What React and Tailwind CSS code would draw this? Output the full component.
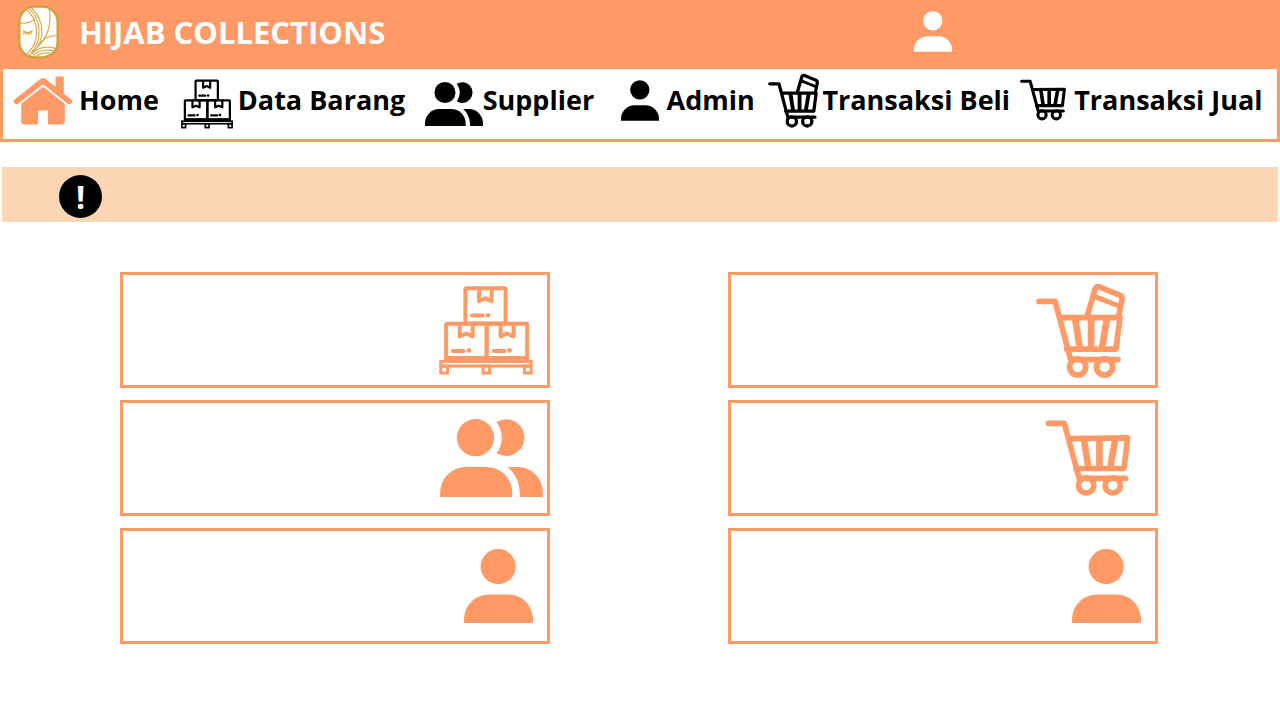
function HouseIcon({ className }) {
  return (
    <svg viewBox="37 227 182 147" className={className} fill="currentColor" aria-hidden="true">
      <path d="M40 299 L122 234 Q128 230 134 234 L166 259 V231 Q166 228 169 228 H188 Q191 228 191 231 V280 L216 300 Q219 303 216 306 L211 311 Q208 314 204 311 L132 254 Q128 251 124 254 L52 311 Q48 314 45 311 L39 305 Q37 302 40 299Z" />
      <path d="M128 259 L194 310 V364 Q194 373 185 373 H143 V334 Q143 331 140 331 H116 Q113 331 113 334 V373 H71 Q62 373 62 364 V310Z" />
    </svg>
  );
}

function BoxesIcon({ className }) {
  return (
    <svg viewBox="58 64 282 268" className={className} fill="none" stroke="currentColor" aria-hidden="true">
      <g strokeWidth="12" strokeLinejoin="round" strokeLinecap="round">
        <rect x="137" y="71" width="121" height="106" rx="3" />
        <rect x="79" y="178" width="122" height="104" rx="3" />
        <rect x="201" y="178" width="122" height="104" rx="3" />
        <path d="M178 72V110L197 101L216 110V72" />
        <path d="M120 180V216L140 207L159 216V180" />
        <path d="M243 180V216L262 207L282 216V180" />
        <path d="M157 153H189M99 260H132M222 260H255" />
      </g>
      <g fill="currentColor" stroke="none">
        <circle cx="205" cy="152" r="7" />
        <circle cx="148" cy="258" r="7" />
        <circle cx="270" cy="258" r="7" />
        <path d="M74 275H328V292H74Z" />
      </g>
      <g strokeWidth="9">
        <rect x="63" y="291" width="272" height="14" />
        <rect x="63" y="305" width="20" height="21" />
        <rect x="190" y="305" width="20" height="21" />
        <rect x="315" y="305" width="20" height="21" />
      </g>
    </svg>
  );
}

function CartIcon({ className }) {
  return (
    <svg viewBox="78 76 257 229" className={className} fill="none" stroke="currentColor" strokeWidth="17" strokeLinecap="round" strokeLinejoin="round" aria-hidden="true">
      <path d="M87 86H135L180 252H320" />
      <path d="M150 132L326 130L315 222H170" />
      <path d="M194 132L208 222M241 132V222M289 131L273 222" strokeLinecap="butt" strokeWidth="20" />
      <circle cx="201" cy="273" r="23" />
      <circle cx="281" cy="273" r="23" />
    </svg>
  );
}

function CartBoxIcon({ className }) {
  return (
    <svg viewBox="50 49 265 283" className={className} fill="none" stroke="currentColor" strokeWidth="17" strokeLinecap="round" strokeLinejoin="round" aria-hidden="true">
      <path d="M59 104H107L153 277H294" />
      <path d="M122 152H300L288 246H142" />
      <path d="M166 152L181 246M214 152V246M262 152L246 246" strokeLinecap="butt" strokeWidth="20" />
      <path d="M202 150L226 67Q230 57 240 61L299 85Q308 89 306 98L296 150" />
      <path d="M224 89L300 119" strokeWidth="15" />
      <circle cx="174" cy="299" r="24" />
      <circle cx="254" cy="299" r="24" />
    </svg>
  );
}

function UsersIcon({ className }) {
  return (
    <svg viewBox="60 72 308 234" className={className} fill="currentColor" aria-hidden="true">
      <circle cx="166" cy="128" r="56" />
      <path d="M229 81A55 55 0 1 1 229 175A78 78 0 0 0 229 81Z" />
      <path d="M60 306V292A76 76 0 0 1 136 216H200A76 76 0 0 1 276 292V306Z" />
      <path d="M263 216H294A74 76 0 0 1 368 292V306H299V292Q297 247 263 216Z" />
    </svg>
  );
}

function UserIcon({ className }) {
  return (
    <svg viewBox="132 72 208 223" className={className} fill="currentColor" aria-hidden="true">
      <circle cx="235" cy="125" r="53" />
      <path d="M132 295V284A75 75 0 0 1 207 209H265A75 75 0 0 1 340 284V295Z" />
    </svg>
  );
}

function Logo({ className }) {
  return (
    <svg viewBox="38 15 122 159" className={className} fill="none" stroke="#d3a03c" strokeLinecap="round" role="img" aria-label="Hijab Collections logo">
      <rect x="42" y="19" width="114" height="151" rx="45" fill="#fffdf8" strokeWidth="7" />
      <g strokeWidth="3">
        <path d="M64 29C101 60 104 124 66 158" />
        <path d="M71 26C109 58 112 122 73 162" />
        <path d="M79 24C118 60 119 122 82 156" />
        <path d="M45 68C60 70 77 65 87 57" />
        <path d="M131 26C139 72 125 112 98 136" />
        <path d="M153 106C128 105 110 115 96 139" />
        <path d="M81 159C99 138 129 135 153 145" />
        <path d="M84 164C103 147 128 144 150 154" />
        <path d="M90 168C108 156 127 153 144 161" />
      </g>
      <path d="M54 91Q67 102 80 91M57 96L54 100M63 98L62 103M70 98L71 103M76 96L79 100" strokeWidth="3.5" />
    </svg>
  );
}

const navItems = [
  { label: "Home", Icon: HouseIcon, icon: "w-[60px] h-[49px] text-[#ff9966]", slot: "w-[66px]" },
  { label: "Data Barang", Icon: BoxesIcon, icon: "w-[52px] h-[50px] mt-2", slot: "w-[57px]" },
  { label: "Supplier", Icon: UsersIcon, icon: "w-[58px] h-[44px] mt-2", slot: "w-[58px]" },
  { label: "Admin", Icon: UserIcon, icon: "w-[38px] h-[41px]", slot: "w-[46px]" },
  { label: "Transaksi Beli", Icon: CartBoxIcon, icon: "w-[51px] h-[55px]", slot: "w-[54px]" },
  { label: "Transaksi Jual", Icon: CartIcon, icon: "w-[46px] h-[42px]", slot: "w-[54px]" },
];

const cards = [
  { label: "Data Barang", Icon: BoxesIcon, icon: "w-[94px] h-[89px] mr-3.5" },
  { label: "Transaksi Beli", Icon: CartBoxIcon, icon: "w-[89px] h-[95px] mr-[30px]" },
  { label: "Supplier", Icon: UsersIcon, icon: "w-[103px] h-[78px] mr-1" },
  { label: "Transaksi Jual", Icon: CartIcon, icon: "w-[86px] h-[76px] mr-6" },
  { label: "Admin", Icon: UserIcon, icon: "w-[69px] h-[74px] mr-3.5" },
  { label: "Akun", Icon: UserIcon, icon: "w-[69px] h-[74px] mr-3.5" },
];

export default function App() {
  return (
    <div className="min-h-screen bg-white font-['Open_Sans','Noto_Sans',sans-serif] text-black">
      <header className="flex h-[69px] items-center justify-between bg-[#ff9966] pb-1.5 pl-[18px] pr-[328px]">
        <div className="flex items-center gap-5">
          <Logo className="h-[54px] w-[41px]" />
          <h1 className="whitespace-nowrap text-[31px] font-bold leading-10 text-white">HIJAB COLLECTIONS</h1>
        </div>
        <button type="button" aria-label="Akun" className="text-white">
          <UserIcon className="h-[41px] w-[38px]" />
        </button>
      </header>

      <nav className="grid h-[73px] grid-cols-[168fr_244fr_196fr_148fr_252fr_257fr] items-center border-x-3 border-b-3 border-[#ff9966] pb-2 pl-2.5">
        {navItems.map(({ label, Icon, icon, slot }) => (
          <a key={label} href="#" className="flex min-w-0 items-center whitespace-nowrap text-[27px] font-bold leading-9">
            <span className={`shrink-0 ${slot}`}>
              <Icon className={icon} />
            </span>
            {label}
          </a>
        ))}
      </nav>

      <main>
        <div role="alert" className="mx-0.5 mt-[25px] flex h-[55px] items-center bg-[#fcd5b5] pl-[57px] pt-1">
          <span className="flex size-[43px] items-center justify-center rounded-full bg-black text-[32px] font-bold leading-none text-white">!</span>
        </div>

        <div className="mt-[50px] grid grid-cols-2 gap-x-[178px] gap-y-3 pl-[120px] pr-[122px]">
          {cards.map(({ label, Icon, icon }) => (
            <a key={label} href="#" aria-label={label} className="flex h-[116px] items-center justify-end border-3 border-[#ff9966] text-[#ff9966]">
              <Icon className={icon} />
            </a>
          ))}
        </div>
      </main>
    </div>
  );
}
